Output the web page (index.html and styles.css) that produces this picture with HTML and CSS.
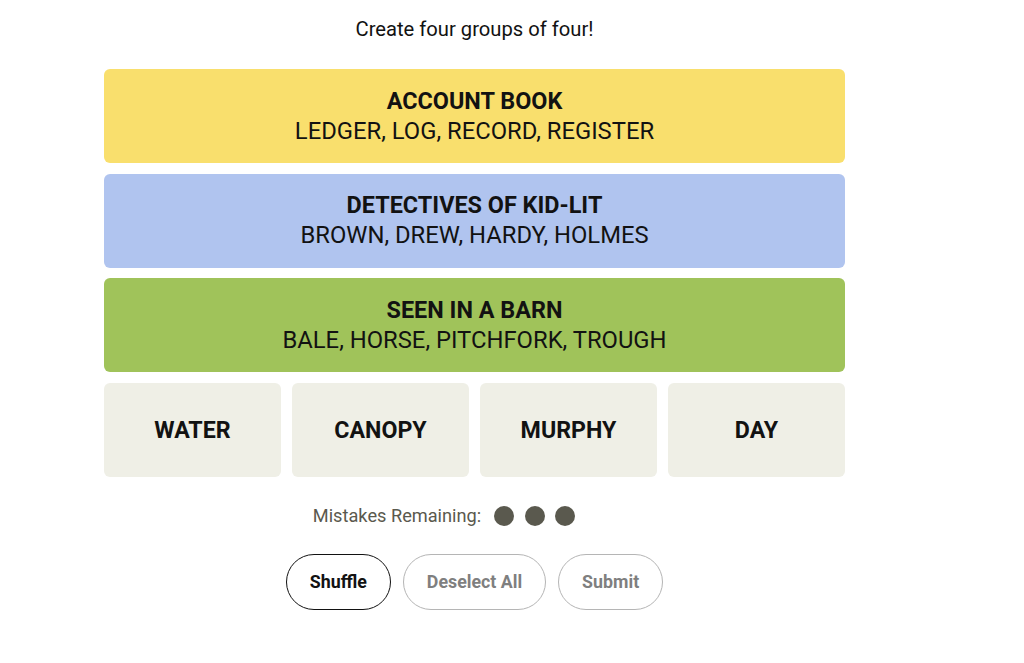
FILE: index.html
```html
<!DOCTYPE html>
<html lang="en">
<head>
<meta charset="utf-8">
<title>Connections</title>
<link rel="stylesheet" href="styles.css">
</head>
<body>
<main class="game">
  <p class="prompt">Create four groups of four!</p>
  <section class="board">
    <div class="solved yellow">
      <h3 class="solved-title">ACCOUNT BOOK</h3>
      <p class="solved-words">LEDGER, LOG, RECORD, REGISTER</p>
    </div>
    <div class="solved blue">
      <h3 class="solved-title">DETECTIVES OF KID-LIT</h3>
      <p class="solved-words">BROWN, DREW, HARDY, HOLMES</p>
    </div>
    <div class="solved green">
      <h3 class="solved-title">SEEN IN A BARN</h3>
      <p class="solved-words">BALE, HORSE, PITCHFORK, TROUGH</p>
    </div>
    <button class="tile">WATER</button>
    <button class="tile">CANOPY</button>
    <button class="tile">MURPHY</button>
    <button class="tile">DAY</button>
  </section>
  <div class="mistakes">
    <span class="mistakes-label">Mistakes Remaining:</span>
    <span class="dots"><i class="dot"></i><i class="dot"></i><i class="dot"></i></span>
  </div>
  <div class="controls">
    <button class="pill active">Shuffle</button>
    <button class="pill">Deselect All</button>
    <button class="pill">Submit</button>
  </div>
</main>
</body>
</html>
```
FILE: styles.css
```css
* { box-sizing: border-box; }

body {
  margin: 0;
  background: #ffffff;
  color: #121212;
  font-family: Roboto, "Liberation Sans", Arial, sans-serif;
}

.game {
  width: 949px;
  display: flex;
  flex-direction: column;
  align-items: center;
}

.prompt {
  margin: 17px 0 0;
  font-size: 20.2px;
  line-height: 24px;
  font-weight: 400;
}

.board {
  margin-top: 28px;
  width: 741px;
  display: grid;
  grid-template-columns: repeat(4, 1fr);
  grid-auto-rows: 94px;
  column-gap: 11px;
  row-gap: 10.5px;
}

.solved {
  grid-column: 1 / -1;
  border-radius: 6px;
  display: flex;
  flex-direction: column;
  align-items: center;
  justify-content: center;
  padding-bottom: 1px;
}

.yellow { background: #f9df6d; }
.blue { background: #b0c4ef; }
.green { background: #a0c35a; }

.solved-title {
  margin: 0;
  font-size: 23.4px;
  line-height: 28px;
  font-weight: 700;
}

.solved-words {
  margin: 2px 0 0;
  font-size: 23.8px;
  line-height: 28px;
  font-weight: 400;
}

.tile {
  border: none;
  border-radius: 6px;
  background: #efefe6;
  color: #121212;
  font-family: inherit;
  font-size: 23.2px;
  font-weight: 700;
  padding: 0;
}

/* the label and dots sit a little left of the board's centre line */
.mistakes {
  margin-top: 27px;
  margin-right: 61px;
  height: 24px;
  display: flex;
  align-items: center;
  gap: 13px;
  color: #5a594e;
  font-size: 18.2px;
  line-height: 24px;
}

.dots {
  display: flex;
  gap: 10.5px;
}

.dot {
  width: 20px;
  height: 20px;
  border-radius: 50%;
  background: #5a594e;
}

.controls {
  margin-top: 26px;
  display: flex;
  gap: 12px;
}

.pill {
  height: 56px;
  padding: 0 23px;
  border-radius: 28px;
  border: 1px solid #b5b5b5;
  background: #ffffff;
  color: #7f7f7f;
  font-family: inherit;
  font-size: 17.8px;
  font-weight: 700;
}

.pill.active {
  border-color: #121212;
  color: #121212;
}
```
